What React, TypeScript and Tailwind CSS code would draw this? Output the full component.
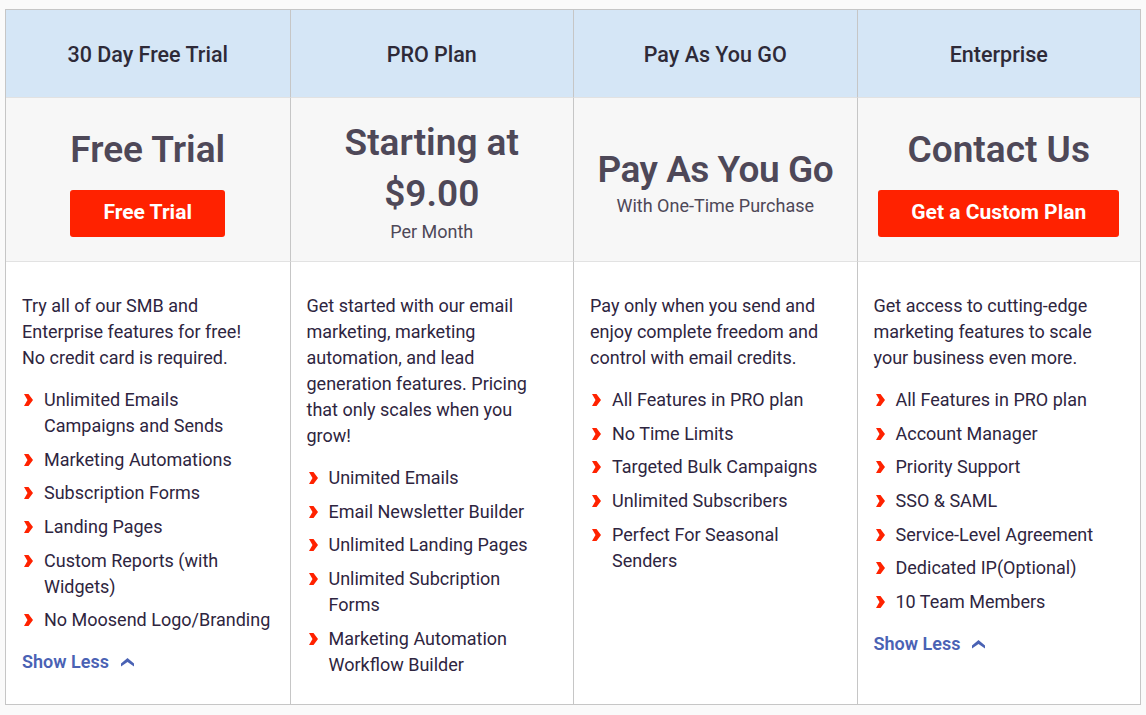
const Bullet = () => (
  <svg width="9" height="12" viewBox="0 0 9 12" className="shrink-0 mt-[7px]">
    <path d="M0 0 H4.5 L9 6 L4.5 12 H0 L3.5 6 Z" fill="#ff2200" />
  </svg>
);

const CaretUp = () => (
  <svg width="13" height="9" viewBox="0 0 13 9" className="ml-3">
    <path d="M0 5.5 L6.5 0 L13 5.5 L13 8.5 L6.5 4 L0 8.5 Z" fill="#4a62b4" />
  </svg>
);

type Plan = {
  head: string;
  price: React.ReactNode;
  intro: React.ReactNode;
  items: React.ReactNode[];
  more?: boolean;
};

const Btn = ({ label, w }: { label: string; w: string }) => (
  <button
    className={`${w} h-[47px] mt-[15px] rounded-[3px] bg-[#ff2200] text-white text-[21px] font-bold`}
  >
    {label}
  </button>
);

const plans: Plan[] = [
  {
    head: "30 Day Free Trial",
    price: (
      <>
        <div className="text-[37px] leading-[50px] font-semibold">Free Trial</div>
        <Btn label="Free Trial" w="w-[155px]" />
      </>
    ),
    intro: (
      <>
        Try all of our SMB and
        <br />
        Enterprise features for free!
        <br />
        No credit card is required.
      </>
    ),
    items: [
      <>
        Unlimited Emails
        <br />
        Campaigns and Sends
      </>,
      "Marketing Automations",
      "Subscription Forms",
      "Landing Pages",
      <>
        Custom Reports (with
        <br />
        Widgets)
      </>,
      "No Moosend Logo/Branding",
    ],
    more: true,
  },
  {
    head: "PRO Plan",
    price: (
      <>
        <div className="text-[37px] leading-[51px] font-semibold">Starting at</div>
        <div className="text-[37px] leading-[51px] font-semibold">$9.00</div>
        <div className="text-[18px] leading-[26px]">Per Month</div>
      </>
    ),
    intro: (
      <>
        Get started with our email
        <br />
        marketing, marketing
        <br />
        automation, and lead
        <br />
        generation features. Pricing
        <br />
        that only scales when you
        <br />
        grow!
      </>
    ),
    items: [
      "Unimited Emails",
      "Email Newsletter Builder",
      "Unlimited Landing Pages",
      <>
        Unlimited Subcription
        <br />
        Forms
      </>,
      <>
        Marketing Automation
        <br />
        Workflow Builder
      </>,
    ],
  },
  {
    head: "Pay As You GO",
    price: (
      <>
        <div className="text-[37px] leading-[50px] font-semibold tracking-[-0.5px]">Pay As You Go</div>
        <div className="text-[18px] leading-[22px]">With One-Time Purchase</div>
      </>
    ),
    intro: (
      <>
        Pay only when you send and
        <br />
        enjoy complete freedom and
        <br />
        control with email credits.
      </>
    ),
    items: [
      "All Features in PRO plan",
      "No Time Limits",
      "Targeted Bulk Campaigns",
      "Unlimited Subscribers",
      <>
        Perfect For Seasonal
        <br />
        Senders
      </>,
    ],
  },
  {
    head: "Enterprise",
    price: (
      <>
        <div className="text-[37px] leading-[50px] font-semibold">Contact Us</div>
        <Btn label="Get a Custom Plan" w="w-[241px]" />
      </>
    ),
    intro: (
      <>
        Get access to cutting-edge
        <br />
        marketing features to scale
        <br />
        your business even more.
      </>
    ),
    items: [
      "All Features in PRO plan",
      "Account Manager",
      "Priority Support",
      "SSO & SAML",
      "Service-Level Agreement",
      "Dedicated IP(Optional)",
      "10 Team Members",
    ],
    more: true,
  },
];

export default function App() {
  return (
    <div
      className="min-h-[715px] w-[1146px] bg-[#fafafa] pt-[9px] pl-[5px] text-[#2e2540]"
      style={{ fontFamily: "Roboto, 'Liberation Sans', sans-serif" }}
    >
      <div className="w-[1136px] border border-[#c6c6c6] bg-white grid grid-cols-4 grid-rows-[88px_164px_442px]">
        {plans.map((p, i) => (
          <div
            key={"h" + i}
            className={`bg-[#d5e6f6] flex items-center justify-center pt-[3px] text-[21.5px] font-medium text-[#2e2a38] border-b border-[#e2e2e2] ${
              i > 0 ? "border-l border-l-[#c6c6c6]" : ""
            }`}
            style={{ gridRow: 1, gridColumn: i + 1 }}
          >
            {p.head}
          </div>
        ))}
        {plans.map((p, i) => (
          <div
            key={"p" + i}
            className={`bg-[#f7f7f7] flex flex-col items-center justify-center text-center text-[#4e4858] border-b border-[#e2e2e2] pt-[2px] ${
              i > 0 ? "border-l border-l-[#c6c6c6]" : ""
            }`}
            style={{ gridRow: 2, gridColumn: i + 1 }}
          >
            {p.price}
          </div>
        ))}
        {plans.map((p, i) => (
          <div
            key={"b" + i}
            className={`pt-[31px] pl-[16px] pr-2 text-[18px] leading-[26px] ${
              i > 0 ? "border-l border-[#c6c6c6]" : ""
            }`}
            style={{ gridRow: 3, gridColumn: i + 1 }}
          >
            <p>{p.intro}</p>
            <ul className="mt-[16px] flex flex-col gap-[7.7px]">
              {p.items.map((it, j) => (
                <li key={j} className="flex gap-[11px] pl-[2px]">
                  <Bullet />
                  <span>{it}</span>
                </li>
              ))}
            </ul>
            {p.more && (
              <div className="mt-[16px] flex items-center text-[18px] font-semibold text-[#4a62b4]">
                Show Less
                <CaretUp />
              </div>
            )}
          </div>
        ))}
      </div>
    </div>
  );
}
